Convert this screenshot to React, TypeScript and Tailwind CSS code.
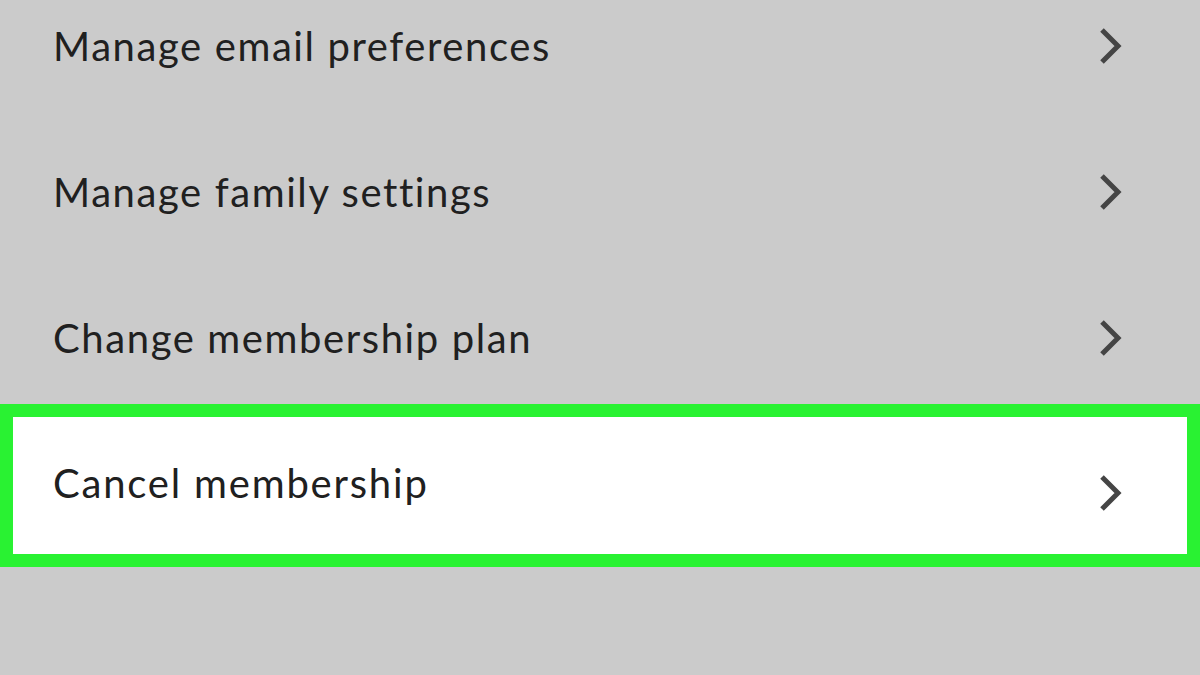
const rows = ['Manage email preferences', 'Manage family settings', 'Change membership plan']

const Chevron = () => (
  <svg width="26" height="40" viewBox="0 0 26 40" className="shrink-0">
    <polyline
      points="4,4 20,20 4,36"
      fill="none"
      stroke="#454545"
      strokeWidth="5"
      strokeLinecap="butt"
      strokeLinejoin="miter"
    />
  </svg>
)

export default function App() {
  return (
    <div
      className="w-[1200px] h-[675px] overflow-hidden bg-[#cbcbcb] text-[#202020]"
      style={{ fontFamily: 'Lato, "Open Sans", sans-serif' }}
    >
      <div className="-mt-[27px] flex flex-col">
        {rows.map((r) => (
          <div key={r} className="h-[146px] flex items-center justify-between pl-[53px] pr-[76px]">
            <span className="text-[40px] leading-none tracking-[1.6px]">{r}</span>
            <Chevron />
          </div>
        ))}
        <div className="-mt-[7px] h-[163px] border-[13px] border-[#29f232] bg-white flex items-center justify-between pl-[40px] pr-[63px]">
          <span className="text-[40px] leading-none tracking-[1.8px] -mt-[5px]">Cancel membership</span>
          <div className="mt-[14px]">
            <Chevron />
          </div>
        </div>
      </div>
    </div>
  )
}
